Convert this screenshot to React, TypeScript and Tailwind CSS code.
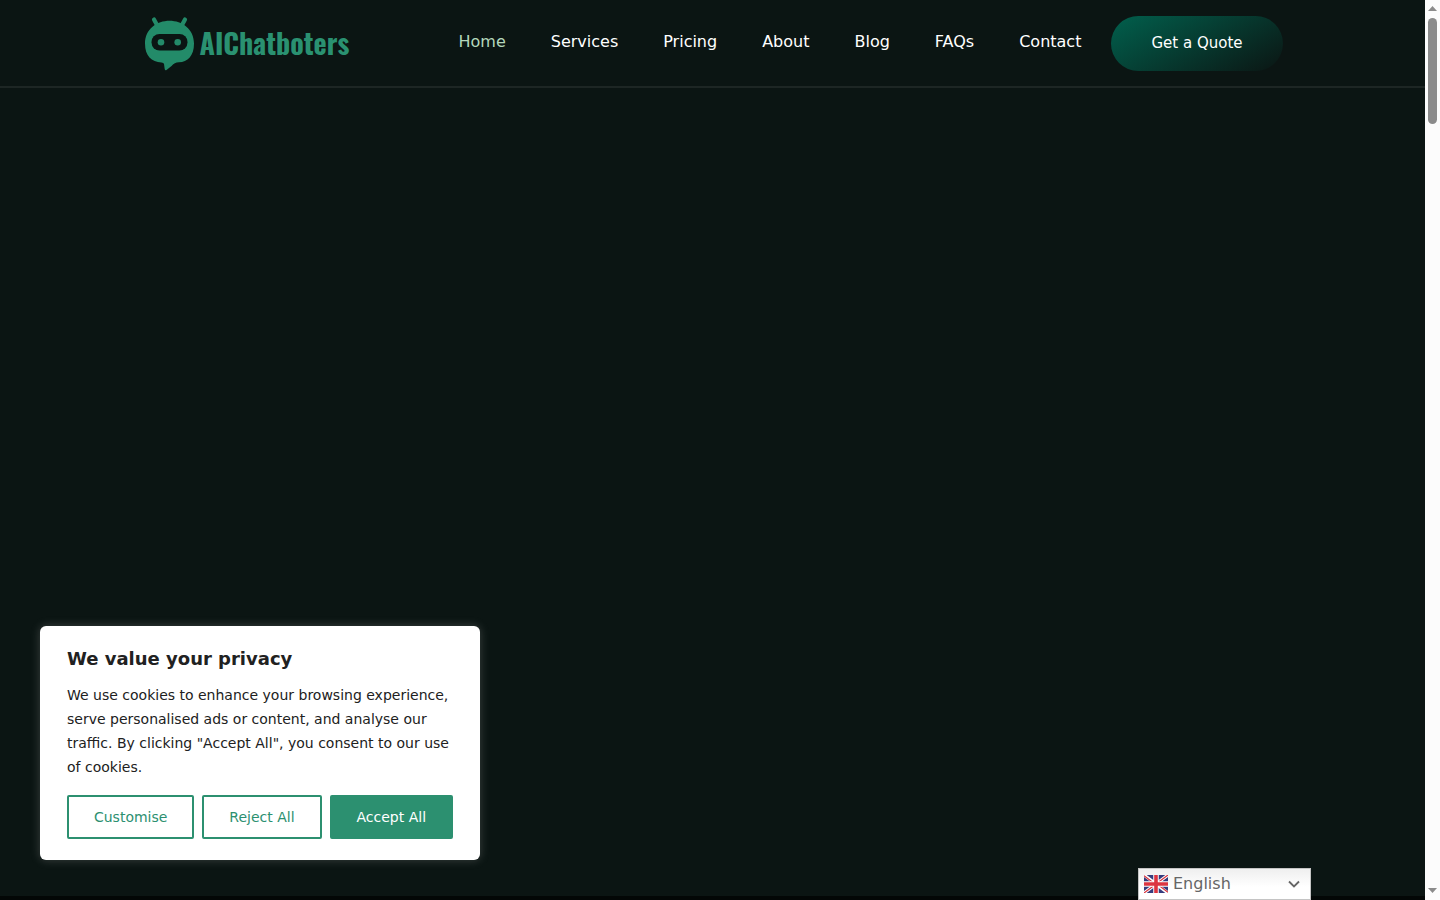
import React from "react";

const links = ["Home", "Services", "Pricing", "About", "Blog", "FAQs", "Contact"];

function Logo() {
  return (
    <a href="#home" aria-label="AIChatboters" className="flex h-14 items-center gap-[5px] text-[#2a9171]">
      <svg viewBox="0 0 52 56" className="h-14 w-13 shrink-0" aria-hidden="true">
        <path
          d="M11 4.500L14 10M42 4.500L39 10"
          stroke="#238b69"
          strokeWidth="4.200"
          strokeLinecap="round"
        />
        <path
          fill="#238b69"
          d="M26.500 5.700C39 5.700 51 14 51 28.500C51 41 44.500 47 36 47.300C32.500 47.500 31 48.500 28.500 51L23.500 55Q22 55.800 21.700 54L21 49Q20.800 47.500 18.500 47.400C8.500 47 2 41 2 28.500C2 14 14 5.700 26.500 5.700Z"
        />
        <rect x="8.500" y="19" width="36" height="16.500" rx="8" fill="#0b1513" />
        <circle cx="18" cy="27.200" r="3.300" fill="#238b69" />
        <circle cx="34.700" cy="27.200" r="3.300" fill="#238b69" />
      </svg>
      <span className="font-['Oswald','Roboto_Condensed','Liberation_Sans_Narrow','Liberation_Sans',sans-serif] text-[28px] leading-8 font-bold">
        AIChatboters
      </span>
    </a>
  );
}

function Header() {
  return (
    <header className="border-b-2 border-[#1d2624]">
      <div className="mx-auto flex h-[86px] w-full max-w-[1140px] items-center justify-between">
        <Logo />
        <div className="flex items-center gap-[30px]">
          <nav className="flex gap-[45px] pb-0.5 text-base">
            {links.map((label, i) => (
              <a
                key={label}
                href={`#${label.toLowerCase()}`}
                className={i === 0 ? "text-[#b4d8bc]" : "text-white"}
              >
                {label}
              </a>
            ))}
          </nav>
          <a
            href="#quote"
            className="flex h-[55px] items-center rounded-full bg-linear-[150deg,#01604d_0%,#0b1513_100%] px-10 text-[15px] text-white"
          >
            Get a Quote
          </a>
        </div>
      </div>
    </header>
  );
}

function CookieNotice() {
  const outline =
    "h-11 flex-auto rounded-xs border-2 border-[#2c9070] text-sm text-[#2c9070]";
  return (
    <section
      aria-labelledby="privacy-title"
      className="absolute bottom-9 left-10 w-[440px] rounded-md bg-white px-[27px] pt-5 pb-[21px] text-[#212121] shadow-[0_0_10px_#acabab4d]"
    >
      <h2 id="privacy-title" className="mb-3 text-lg leading-[25px] font-bold">
        We value your privacy
      </h2>
      <p className="mb-4 text-sm leading-6">
        We use cookies to enhance your browsing experience, serve personalised ads or content, and
        analyse our traffic. By clicking "Accept All", you consent to our use of cookies.
      </p>
      <div className="flex gap-2">
        <button type="button" className={outline}>Customise</button>
        <button type="button" className={outline}>Reject All</button>
        <button
          type="button"
          className="h-11 flex-auto rounded-xs border-2 border-[#2c9070] bg-[#2c9070] text-sm text-white"
        >
          Accept All
        </button>
      </div>
    </section>
  );
}

function UnionJack() {
  return (
    <svg viewBox="0 0 24 18" className="pointer-events-none absolute top-[7px] left-1.5 h-[18px] w-6" aria-hidden="true">
      <path fill="#343b7d" d="M0 0h24v18H0z" />
      <path stroke="#fff" strokeWidth="3.200" d="M0 0l24 18M24 0L0 18" />
      <path stroke="#d8343e" strokeWidth="1.200" d="M0 .7l10 7.500M24 0l-10 7.500M24 17.300l-10-7.500M0 18l10-7.500" />
      <path stroke="#fff" strokeWidth="5.500" d="M12 0v18M0 9h24" />
      <path stroke="#dc3440" strokeWidth="3.600" d="M12 0v18M0 9h24" />
    </svg>
  );
}

function LanguagePicker() {
  return (
    <div className="absolute right-[114px] bottom-0 w-[173px]">
      <select
        aria-label="Language"
        className="block h-8 w-full appearance-none border border-[#c4c4c4] bg-linear-to-b from-[#efefef] to-white to-60% pr-8 pl-[34px] text-base text-[#666]"
      >
        <option>English</option>
      </select>
      <UnionJack />
      <svg
        viewBox="0 0 12 8"
        className="pointer-events-none absolute top-3 right-[11px] h-2 w-3"
        fill="none"
        stroke="#666"
        strokeWidth="1.800"
        aria-hidden="true"
      >
        <path d="M1 1.500l5 5 5-5" />
      </svg>
    </div>
  );
}

function ScrollTrack() {
  return (
    <div className="flex w-[15px] shrink-0 flex-col items-center bg-[#fcfcfc] pt-1.5 pb-[7px]" aria-hidden="true">
      <svg viewBox="0 0 9 5" className="h-[5px] w-[9px]" fill="#8b8b8b">
        <path d="M0 5L4.500 0L9 5Z" />
      </svg>
      <div className="mt-[7px] h-[106px] w-[9px] rounded-full bg-[#8b8b8b]" />
      <svg viewBox="0 0 9 5" className="mt-auto h-[5px] w-[9px]" fill="#8b8b8b">
        <path d="M0 0L4.500 5L9 0Z" />
      </svg>
    </div>
  );
}

export default function App() {
  return (
    <div className="flex min-h-screen font-['DejaVu_Sans',sans-serif]">
      <div className="relative min-w-0 flex-1 border-b-4 border-[#030706] bg-[#0b1513]">
        <Header />
        <main>
          <CookieNotice />
        </main>
        <div className="absolute inset-x-0 -bottom-1">
          <LanguagePicker />
        </div>
      </div>
      <ScrollTrack />
    </div>
  );
}
